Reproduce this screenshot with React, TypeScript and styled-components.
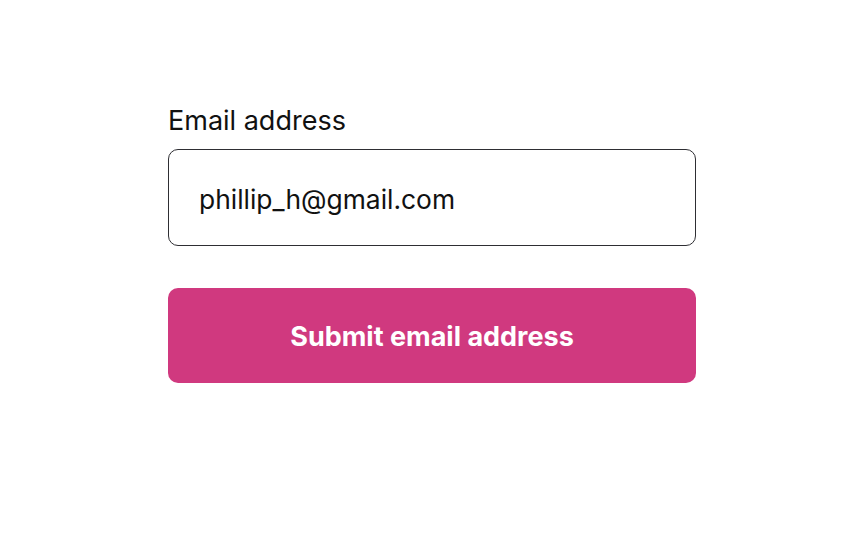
import styled, { createGlobalStyle } from "styled-components";

const GlobalStyle = createGlobalStyle`
  html, body {
    margin: 0;
    padding: 0;
    background: #ffffff;
  }
  body {
    font-family: Inter, "Liberation Sans", sans-serif;
    color: #111111;
  }
`;

const Page = styled.div`
  width: 864px;
  height: 540px;
  display: flex;
  justify-content: center;
  padding-top: 103px;
  box-sizing: border-box;
`;

const Form = styled.form`
  width: 528px;
  display: flex;
  flex-direction: column;
`;

const Label = styled.label`
  font-size: 27px;
  line-height: 36px;
  color: #111111;
  margin-bottom: 10px;
`;

const Input = styled.input`
  box-sizing: border-box;
  height: 97px;
  width: 100%;
  border: 1.6px solid #2e2e33;
  border-radius: 10px;
  padding: 2px 30px 0;
  font-family: Inter, "Liberation Sans", sans-serif;
  font-size: 26.4px;
  color: #111111;
  outline: none;
  background: #ffffff;
`;

const Button = styled.button`
  margin-top: 42px;
  height: 95px;
  width: 100%;
  border: none;
  border-radius: 10px;
  background: #d0397f;
  color: #ffffff;
  font-family: Inter, "Liberation Sans", sans-serif;
  font-size: 27px;
  font-weight: 700;
  padding-top: 2px;
  cursor: pointer;
`;

export default function App() {
  return (
    <>
      <GlobalStyle />
      <Page>
        <Form onSubmit={(e) => e.preventDefault()}>
          <Label htmlFor="email">Email address</Label>
          <Input id="email" type="email" defaultValue="phillip_h@gmail.com" />
          <Button type="submit">Submit email address</Button>
        </Form>
      </Page>
    </>
  );
}
